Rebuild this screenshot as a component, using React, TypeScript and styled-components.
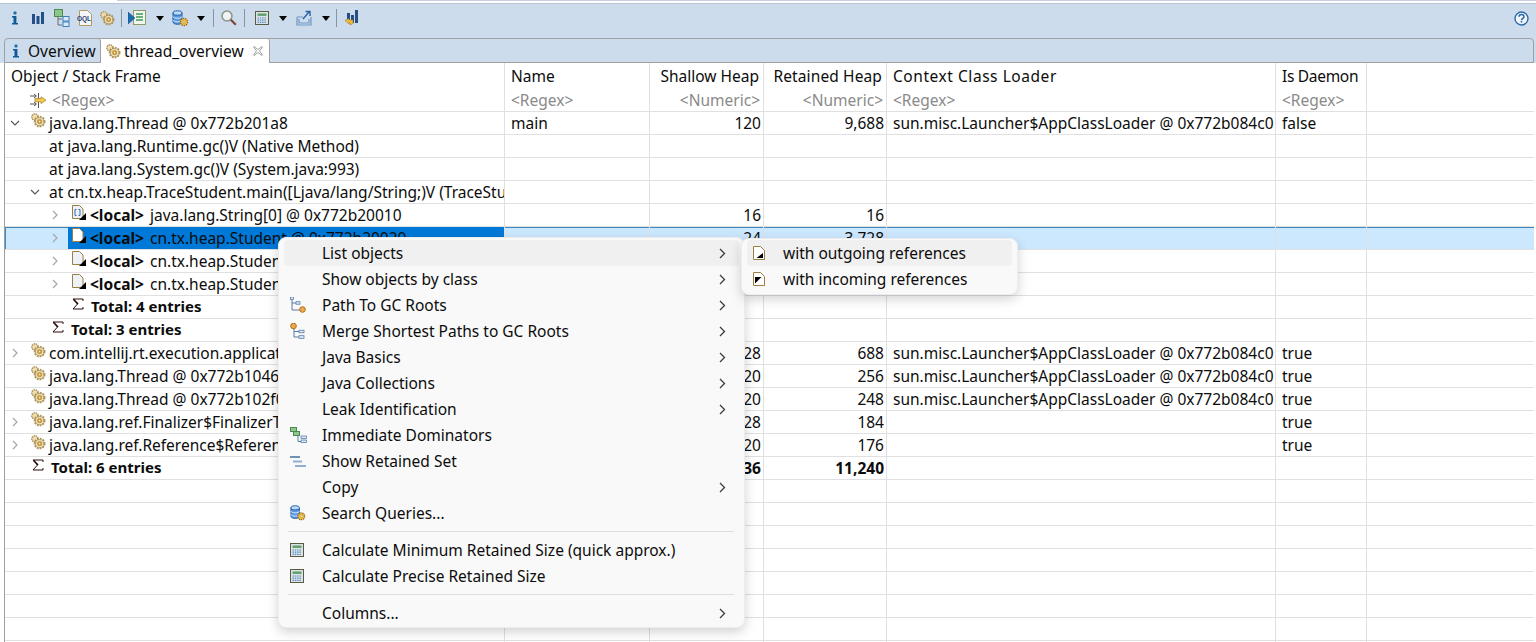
import React from "react";
import styled, { createGlobalStyle } from "styled-components";

const FONT = `"Noto Sans", "Open Sans", "Liberation Sans", sans-serif`;

const Global = createGlobalStyle`
  html, body { margin: 0; padding: 0; background: #fff; }
  body { font-family: ${FONT}; font-size: 15.5px; color: #0c0c0c; }
  * { box-sizing: border-box; }
`;

const Page = styled.div`
  position: relative;
  width: 1536px;
  height: 642px;
  overflow: hidden;
  background: #fff;
  display: flex;
  flex-direction: column;
`;
const TopStrip = styled.div`
  height: 4px;
  flex: none;
  display: flex;
  border-bottom: 1px solid #b7c3d8;
`;
const TopGap = styled.div`
  width: 117px;
  flex: none;
`;
const TopRest = styled.div`
  flex: 1;
  border-top: 1px solid #c8cfe0;
`;
const Toolbar = styled.div`
  height: 34px;
  flex: none;
  background: #cddcec;
  display: flex;
  align-items: center;
  padding: 0 7px 6px 4px;
`;
const ToolSlot = styled.div<{ $w: number }>`
  width: ${(p) => p.$w}px;
  flex: none;
  display: flex;
  align-items: center;
  justify-content: center;
`;
const ToolSep = styled.div`
  width: 4px;
  flex: none;
  height: 18px;
  display: flex;
  justify-content: center;
  &::before {
    content: "";
    width: 1px;
    background: #8a949e;
  }
`;
const DropArrow = styled.div`
  width: 0;
  height: 0;
  flex: none;
  border-left: 4.5px solid transparent;
  border-right: 4.5px solid transparent;
  border-top: 5px solid #000;
`;
const ToolSpring = styled.div`
  flex: 1;
`;
const TabStrip = styled.div`
  height: 25px;
  flex: none;
  background: #cddcec;
  padding: 0 2px 0 4px;
`;
const TabFrame = styled.div`
  height: 25px;
  border: 1px solid #a0a0a0;
  border-radius: 4px 4px 0 0;
  display: flex;
`;
const Tab = styled.div<{ $active?: boolean; $w: number }>`
  width: ${(p) => p.$w}px;
  height: ${(p) => (p.$active ? 24 : 23)}px;
  flex: none;
  display: flex;
  align-items: center;
  background: ${(p) => (p.$active ? "#fff" : "transparent")};
  border-right: 1px solid #a0a0a0;
  border-radius: 0 3px 0 0;
  padding-left: ${(p) => (p.$active ? 4 : 7)}px;
  white-space: nowrap;
  position: relative;
  z-index: 1;
`;
const TabIcon = styled.span<{ $w: number }>`
  width: ${(p) => p.$w}px;
  flex: none;
  display: flex;
`;
const TabClose = styled.span`
  margin-left: 9px;
  display: flex;
`;
const Body = styled.div`
  flex: 1;
  min-height: 0;
  margin: 0 2px 0 4px;
  border-left: 1px solid #a0a0a0;
  overflow: hidden;
`;
const COLS = "500px 145px 114px 123px 389px 91px 1fr";
const HeadGrid = styled.div`
  display: grid;
  grid-template-columns: ${COLS};
  height: 49px;
  border-bottom: 1px solid #e0e0e0;
`;
const HeadCell = styled.div<{ $right?: boolean }>`
  border-right: 1px solid #e0e0e0;
  display: flex;
  flex-direction: column;
  align-items: ${(p) => (p.$right ? "flex-end" : "flex-start")};
  padding: 1px ${(p) => (p.$right ? 3 : 0)}px 0 6px;
  overflow: hidden;
  white-space: nowrap;
  &:last-child { border-right: none; }
`;
const HeadTitle = styled.div<{ $ls?: number }>`
  height: 25px;
  line-height: 25px;
  padding-right: 1px;
  letter-spacing: ${(p) => p.$ls ?? 0}px;
`;
const HeadFilter = styled.div`
  height: 22px;
  line-height: 22px;
  color: #8a8a8a;
  display: flex;
  align-items: center;
`;
const FilterIcon = styled.span`
  width: 22px;
  margin-left: 19px;
  display: flex;
`;
const Row = styled.div<{ $sel?: boolean }>`
  display: grid;
  grid-template-columns: ${COLS};
  height: 23px;
  border-bottom: 1px solid #e0e0e0;
  background: ${(p) => (p.$sel ? "#cce8ff" : "transparent")};
  box-shadow: ${(p) => (p.$sel ? "inset 1px 1px 0 #3f87bd" : "none")};
`;
const Cell = styled.div<{ $right?: boolean; $bold?: boolean }>`
  border-right: 1px solid #e0e0e0;
  line-height: 22px;
  white-space: nowrap;
  overflow: hidden;
  text-align: ${(p) => (p.$right ? "right" : "left")};
  padding: 0 ${(p) => (p.$right ? 2 : 0)}px 0 6px;
  font-weight: ${(p) => (p.$bold ? 700 : 400)};
  &:last-child { border-right: none; }
`;
const TreeCell = styled.div<{ $depth: number }>`
  display: flex;
  align-items: center;
  height: 22px;
  border-right: 1px solid #e0e0e0;
  overflow: hidden;
  white-space: nowrap;
  padding-left: ${(p) => 2 + p.$depth * 20}px;
`;
const Twist = styled.span`
  width: 16px;
  flex: none;
  display: flex;
  justify-content: center;
`;
const NodeIcon = styled.span<{ $w: number; $pr: number; $pt: number }>`
  width: ${(p) => p.$w}px;
  flex: none;
  height: 22px;
  display: flex;
  justify-content: flex-end;
  align-items: flex-start;
  padding: ${(p) => p.$pt}px ${(p) => p.$pr}px 0 0;
`;
const IconGap = styled.span`
  width: 6px;
  flex: none;
`;
const Label = styled.span<{ $bold?: boolean }>`
  flex: none;
  height: 22px;
  line-height: ${(p) => (p.$bold ? 20 : 22)}px;
  font-weight: ${(p) => (p.$bold ? 700 : 400)};
  font-size: ${(p) => (p.$bold ? 15 : 15.5)}px;
  b { font-weight: 700; margin-right: 2px; }
`;
const SelBlock = styled.div`
  flex: 1;
  display: flex;
  align-items: center;
  height: 22px;
  margin-left: 5px;
  background: #0078d7;
  overflow: hidden;
`;
const Menu = styled.div<{ $x: number; $y: number; $w: number; $h: number; $pt: number }>`
  position: absolute;
  left: ${(p) => p.$x}px;
  top: ${(p) => p.$y}px;
  width: ${(p) => p.$w}px;
  height: ${(p) => p.$h}px;
  background: #f9f9f9;
  border: 1px solid #ececec;
  border-radius: 8px;
  box-shadow: 0 4px 12px rgba(0, 0, 0, 0.18);
  padding: ${(p) => p.$pt}px 5px 0;
  display: flex;
  flex-direction: column;
`;
const MenuItem = styled.div<{ $hot?: boolean }>`
  height: 26px;
  flex: none;
  display: flex;
  align-items: center;
  border-radius: 4px;
  background: ${(p) => (p.$hot ? "#f0f0f0" : "transparent")};
  white-space: nowrap;
  color: #0c0c0c;
`;
const MenuIcon = styled.span<{ $w: number }>`
  width: ${(p) => p.$w}px;
  flex: none;
  display: flex;
  padding-left: 6px;
`;
const MenuText = styled.span`
  flex: 1;
`;
const MenuArrow = styled.span`
  width: 20px;
  flex: none;
  display: flex;
  justify-content: flex-start;
`;
const MenuSep = styled.div`
  height: 1px;
  flex: none;
  margin: 5px 0 5px 4px;
  width: 446px;
  background: #dedede;
`;

/* ---------- icons ---------- */
const Info = () => (
  <svg width="8" height="14" viewBox="0 0 8 14">
    <rect x="2.5" y="0.5" width="3" height="3" rx="1" fill="#1d6aa8" />
    <path d="M1 5h4.400v7H7v1.500H1V12h1.500V6.500H1z" fill="#0f5a98" />
  </svg>
);
const Bars = () => (
  <svg width="14" height="14" viewBox="0 0 14 14">
    <rect x="1" y="3" width="3" height="10" fill="#234f86" />
    <rect x="5.5" y="5" width="3" height="8" fill="#234f86" />
    <rect x="10" y="1" width="3" height="12" fill="#234f86" />
  </svg>
);
const DomTree = () => (
  <svg width="16" height="18" viewBox="0 0 16 18">
    <path d="M4 7v9h4M4 10h4" fill="none" stroke="#6a6a6a" />
    <rect x="0.5" y="0.5" width="8" height="7" fill="#8cc68a" stroke="#4c8a4e" />
    <rect x="9" y="7.5" width="6" height="4.5" fill="#dbe8f6" stroke="#3d7ec0" />
    <rect x="9" y="13" width="6" height="4.5" fill="#dbe8f6" stroke="#3d7ec0" />
  </svg>
);
const Oql = () => (
  <svg width="16" height="16" viewBox="0 0 16 16">
    <path d="M2.500 .5h8l4 4v11h-12z" fill="#f4f6f8" stroke="#b39b62" />
    <text x="0" y="11" fontSize="6.500" fontWeight="700" fill="#1f3f78" fontFamily="Liberation Sans">
      OQL
    </text>
  </svg>
);
const Gear = ({ s = 16 }: { s?: number }) => (
  <svg width={s} height={s} viewBox="0 0 16 16">
    <circle cx="5" cy="5" r="3.200" fill="#f0dfb2" stroke="#a48c58" strokeWidth="1.400" strokeDasharray="1.400 .8" />
    <circle cx="9.600" cy="9.600" r="5" fill="none" stroke="#b09658" strokeWidth="1.800" strokeDasharray="1.800 1.100" />
    <circle cx="9.600" cy="9.600" r="4.100" fill="#f3e4ba" stroke="#9c8450" strokeWidth=".7" />
    <circle cx="9.600" cy="9.600" r="2.200" fill="#d6a040" stroke="#a57a2a" strokeWidth=".6" />
    <circle cx="9.600" cy="9.600" r=".8" fill="#f8eed0" />
  </svg>
);
const QueryList = () => (
  <svg width="18" height="16" viewBox="0 0 18 16">
    <rect x="5.500" y="0.5" width="12" height="14" fill="#f2f7ee" stroke="#8e9a68" />
    <path d="M8 4h7M8 7h7M8 10h7" stroke="#3c9b5a" strokeWidth="1.300" />
    <path d="M0 2l7 6-7 6z" fill="#1d6db0" stroke="#114a80" strokeWidth=".5" />
  </svg>
);
const DbGear = ({ s = 17 }: { s?: number }) => (
  <svg width={s} height={s} viewBox="0 0 17 17">
    <path d="M1 3v9c0 3 9 3 9 0V3z" fill="#5a9ae0" stroke="#1f5ea8" />
    <ellipse cx="5.500" cy="3" rx="4.500" ry="2.200" fill="#bcdaf6" stroke="#1f5ea8" />
    <path d="M1 6.500c0 2.400 9 2.400 9 0M1 10c0 2.400 9 2.400 9 0" fill="none" stroke="#dcebf9" />
    <circle cx="12" cy="12" r="3.600" fill="#f0c04a" stroke="#9a6a1a" strokeWidth="1.400" strokeDasharray="1.400 .8" />
    <circle cx="12" cy="12" r="1.300" fill="#fff4cf" stroke="#8c6a20" strokeWidth=".5" />
  </svg>
);
const Magnifier = () => (
  <svg width="16" height="16" viewBox="0 0 16 16">
    <circle cx="6" cy="6" r="5" fill="#eef4f4" stroke="#8b9188" strokeWidth="1.500" />
    <path d="M9.800 9.800l5 5" stroke="#7a4a30" strokeWidth="2.200" />
  </svg>
);
const Calc = ({ s = 14 }: { s?: number }) => (
  <svg width={s} height={s} viewBox="0 0 14 14">
    <rect x=".5" y=".5" width="13" height="13" fill="#dbe3e4" stroke="#5a5a40" />
    <rect x="2.500" y="2.500" width="9" height="2.400" fill="#5f9e6a" />
    <path d="M2.500 7h9M2.500 9.200h9M2.500 11.300h9" stroke="#5a8fc8" strokeWidth="1.200" strokeDasharray="1.500 .8" />
  </svg>
);
const ExportBox = () => (
  <svg width="16" height="16" viewBox="0 0 16 16">
    <path d="M1 7h6M15 7v8H1V7M3 9v4h10V9" fill="none" stroke="#6c96c4" strokeWidth="1.200" />
    <path d="M7 9l6-7M9.500 1.500H14V6" fill="none" stroke="#2a62a8" strokeWidth="1.400" />
  </svg>
);
const BarsArrow = () => (
  <svg width="14" height="16" viewBox="0 0 14 16">
    <rect x="2" y="3" width="3" height="9" fill="#234f86" />
    <rect x="6" y="5" width="3" height="8" fill="#234f86" />
    <rect x="10" y="0" width="3" height="13" fill="#234f86" />
    <path d="M0 10.500l4-2v1.500h4v3.500l-3 1.500v-2.500H4V14z" fill="#f2c040" stroke="#a67a20" strokeWidth=".6" />
  </svg>
);
const Help = () => (
  <svg width="15" height="15" viewBox="0 0 15 15">
    <circle cx="7.500" cy="7.500" r="6.500" fill="#f2f6fb" stroke="#2e6ca8" strokeWidth="1.400" />
    <path d="M5 5.800c0-3 5-3 5 0 0 1.800-2.500 1.600-2.500 3.400" fill="none" stroke="#2e6ca8" strokeWidth="1.500" />
    <rect x="6.700" y="10" width="1.600" height="1.600" fill="#2e6ca8" />
  </svg>
);
const Close = () => (
  <svg width="10" height="10" viewBox="0 0 10 10">
    <path d="M1 .5l4 3 4-3 .5.5-3 4 3 4-.5.5-4-3-4 3-.5-.5 3-4-3-4z" fill="#fff" stroke="#8a8a8a" strokeWidth=".8" />
  </svg>
);
const FilterGlyph = () => (
  <svg width="17" height="15" viewBox="0 0 17 15">
    <path d="M0 3h6M0 11h6M4 1l2.400 2L4 5M4 9l2.400 2L4 13M8.500 0v6M8.500 9v6" fill="none" stroke="#555" />
    <path d="M5 5.600h6V3.800l5 3.400-5 3.400V8.800H5z" fill="#f3cb52" stroke="#a67a20" strokeWidth=".7" />
  </svg>
);
const ChevDown = () => (
  <svg width="10" height="6" viewBox="0 0 10 6">
    <path d="M1 1l4 4 4-4" fill="none" stroke="#555" strokeWidth="1.100" />
  </svg>
);
const ChevRight = () => (
  <svg width="6" height="10" viewBox="0 0 6 10">
    <path d="M1 1l4 4-4 4" fill="none" stroke="#a6a6a6" strokeWidth="1.200" />
  </svg>
);
const MenuChev = () => (
  <svg width="7" height="11" viewBox="0 0 7 11">
    <path d="M1 1l4.500 4.500L1 10" fill="none" stroke="#3c3c3c" strokeWidth="1.300" />
  </svg>
);
const Sigma = () => (
  <svg width="12" height="12" viewBox="0 0 12 12">
    <path d="M11 3V1H1l4.500 5L1 11h10V9" fill="none" stroke="#2a0a0a" strokeWidth="1" />
    <path d="M1.500 1.200l4.500 4.800" stroke="#2a0a0a" strokeWidth="1.600" />
  </svg>
);
const Doc = ({ kind, fill = "#eef2f8" }: { kind: "plain" | "array"; fill?: string }) => (
  <svg width="14" height="15" viewBox="0 0 14 15">
    <path d="M.5 .5h7l3.500 3.500V13.500H.5z" fill={fill} stroke="#9a7f45" />
    {kind === "array" && <path d="M4.500 4.500H3v6h1.500M6.500 4.500H8v6H6.500" fill="none" stroke="#2d6cb0" />}
    <path d="M14 8v7H7z" fill="#000" />
  </svg>
);
const RefOut = () => (
  <svg width="12" height="14" viewBox="0 0 12 14">
    <path d="M.5 .5h7l4 4v9H.5z" fill="#fff" stroke="#9a7f45" />
    <path d="M10 7v5H3.500z" fill="#000" />
  </svg>
);
const RefIn = () => (
  <svg width="12" height="14" viewBox="0 0 12 14">
    <path d="M.5 .5h7l4 4v9H.5z" fill="#fff" stroke="#9a7f45" />
    <path d="M2 5h6.500L2 11.500z" fill="#000" />
  </svg>
);
const PathGc = () => (
  <svg width="16" height="16" viewBox="0 0 16 16">
    <path d="M2 1v12h8M2 6h6" fill="none" stroke="#5a7ca8" />
    <rect x=".5" y="0" width="3" height="2.500" fill="#dbe8f6" stroke="#4a6ea0" strokeWidth=".7" />
    <rect x="6" y="4.700" width="4" height="2.500" fill="#dbe8f6" stroke="#4a6ea0" strokeWidth=".7" />
    <circle cx="12.500" cy="12.500" r="2.800" fill="#f2a84a" stroke="#a8701f" />
  </svg>
);
const MergeGc = () => (
  <svg width="16" height="16" viewBox="0 0 16 16">
    <path d="M4 5v9h7M4 8.500h7" fill="none" stroke="#5a7ca8" />
    <circle cx="3.500" cy="3" r="2.800" fill="#f2a84a" stroke="#a8701f" />
    <rect x="9" y="7.200" width="5" height="2.600" fill="#dbe8f6" stroke="#4a6ea0" strokeWidth=".7" />
    <rect x="9" y="12.700" width="5" height="2.600" fill="#dbe8f6" stroke="#4a6ea0" strokeWidth=".7" />
  </svg>
);
const ImmDom = () => (
  <svg width="17" height="16" viewBox="0 0 17 16">
    <rect x=".5" y=".5" width="6" height="4" fill="#8cc68a" stroke="#4c8a4e" />
    <rect x="3.500" y="4.500" width="6" height="4" fill="#8cc68a" stroke="#4c8a4e" />
    <path d="M8 8.500v6h3" fill="none" stroke="#5a7ca8" />
    <rect x="11" y="9" width="5.500" height="2.500" fill="#dbe8f6" stroke="#4a6ea0" strokeWidth=".7" />
    <rect x="11" y="13" width="5.500" height="2.500" fill="#dbe8f6" stroke="#4a6ea0" strokeWidth=".7" />
  </svg>
);
const Retained = () => (
  <svg width="16" height="13" viewBox="0 0 16 13">
    <rect x="0" y="1" width="10" height="2" fill="#6f93b8" />
    <rect x="3" y="5.500" width="9" height="2" fill="#8fb0cf" />
    <rect x="5" y="10" width="11" height="2" fill="#8fb0cf" />
  </svg>
);

/* ---------- data ---------- */
type RowT = {
  depth: number;
  twist?: "down" | "right";
  icon?: "gear" | "array" | "doc" | "sigma";
  label: React.ReactNode;
  bold?: boolean;
  sel?: boolean;
  name?: string;
  shallow?: string;
  retained?: string;
  loader?: string;
  daemon?: string;
};
const LOADER = "sun.misc.Launcher$AppClassLoader @ 0x772b084c0";
const Local = ({ t }: { t: string }) => (
  <>
    <b>&lt;local&gt;</b> {t}
  </>
);
const ROWS: RowT[] = [
  { depth: 0, twist: "down", icon: "gear", label: "java.lang.Thread @ 0x772b201a8", name: "main", shallow: "120", retained: "9,688", loader: LOADER, daemon: "false" },
  { depth: 1, label: "at java.lang.Runtime.gc()V (Native Method)" },
  { depth: 1, label: "at java.lang.System.gc()V (System.java:993)" },
  { depth: 1, twist: "down", label: "at cn.tx.heap.TraceStudent.main([Ljava/lang/String;)V (TraceStudent.java:24)" },
  { depth: 2, twist: "right", icon: "array", label: <Local t="java.lang.String[0] @ 0x772b20010" />, shallow: "16", retained: "16" },
  { depth: 2, twist: "right", icon: "doc", sel: true, label: <Local t="cn.tx.heap.Student @ 0x772b20020" />, shallow: "24", retained: "3,728" },
  { depth: 2, twist: "right", icon: "doc", label: <Local t="cn.tx.heap.Student @ 0x772b20058" /> },
  { depth: 2, twist: "right", icon: "doc", label: <Local t="cn.tx.heap.Student @ 0x772b20090" /> },
  { depth: 2, icon: "sigma", label: "Total: 4 entries", bold: true },
  { depth: 1, icon: "sigma", label: "Total: 3 entries", bold: true },
  { depth: 0, twist: "right", icon: "gear", label: "com.intellij.rt.execution.application.AppMainV2$1 @ 0x772b10000", shallow: "128", retained: "688", loader: LOADER, daemon: "true" },
  { depth: 0, icon: "gear", label: "java.lang.Thread @ 0x772b10460", shallow: "120", retained: "256", loader: LOADER, daemon: "true" },
  { depth: 0, icon: "gear", label: "java.lang.Thread @ 0x772b102f0", shallow: "120", retained: "248", loader: LOADER, daemon: "true" },
  { depth: 0, twist: "right", icon: "gear", label: "java.lang.ref.Finalizer$FinalizerThread @ 0x772b10200", shallow: "128", retained: "184", daemon: "true" },
  { depth: 0, twist: "right", icon: "gear", label: "java.lang.ref.Reference$ReferenceHandler @ 0x772b10100", shallow: "120", retained: "176", daemon: "true" },
  { depth: 0, icon: "sigma", label: "Total: 6 entries", bold: true, shallow: "636", retained: "11,240" },
];

const NodeGlyph = ({ r }: { r: RowT }) => {
  if (r.icon === "gear")
    return (
      <NodeIcon $w={26} $pr={3} $pt={0}>
        <Gear />
      </NodeIcon>
    );
  if (r.icon === "array")
    return (
      <NodeIcon $w={27} $pr={4} $pt={1}>
        <Doc kind="array" />
      </NodeIcon>
    );
  if (r.icon === "doc")
    return (
      <NodeIcon $w={r.sel ? 22 : 27} $pr={4} $pt={1}>
        <Doc kind="plain" fill={r.sel ? "#fff" : "#eef2f8"} />
      </NodeIcon>
    );
  if (r.icon === "sigma")
    return (
      <NodeIcon $w={28} $pr={7} $pt={2}>
        <Sigma />
      </NodeIcon>
    );
  return <IconGap />;
};

const TreeNode = ({ r }: { r: RowT }) => (
  <TreeCell $depth={r.depth}>
    <Twist>{r.twist === "down" ? <ChevDown /> : r.twist === "right" ? <ChevRight /> : null}</Twist>
    {r.sel ? (
      <SelBlock>
        <NodeGlyph r={r} />
        <Label>{r.label}</Label>
      </SelBlock>
    ) : (
      <>
        <NodeGlyph r={r} />
        <Label $bold={r.bold}>{r.label}</Label>
      </>
    )}
  </TreeCell>
);

const HEADS: { t: string; f: string; icon?: boolean; right?: boolean; ls?: number }[] = [
  { t: "Object / Stack Frame", f: "<Regex>", icon: true },
  { t: "Name", f: "<Regex>" },
  { t: "Shallow Heap", f: "<Numeric>", right: true },
  { t: "Retained Heap", f: "<Numeric>", right: true, ls: 0.12 },
  { t: "Context Class Loader", f: "<Regex>", ls: 0.55 },
  { t: "Is Daemon", f: "<Regex>", ls: -0.3 },
  { t: "", f: "" },
];

const MENU: { t: string; icon?: React.ReactNode; arrow?: boolean; hot?: boolean; sep?: boolean }[] = [
  { t: "List objects", arrow: true, hot: true },
  { t: "Show objects by class", arrow: true },
  { t: "Path To GC Roots", arrow: true, icon: <PathGc /> },
  { t: "Merge Shortest Paths to GC Roots", arrow: true, icon: <MergeGc /> },
  { t: "Java Basics", arrow: true },
  { t: "Java Collections", arrow: true },
  { t: "Leak Identification", arrow: true },
  { t: "Immediate Dominators", icon: <ImmDom /> },
  { t: "Show Retained Set", icon: <Retained /> },
  { t: "Copy", arrow: true },
  { t: "Search Queries...", icon: <DbGear s={16} /> },
  { t: "", sep: true },
  { t: "Calculate Minimum Retained Size (quick approx.)", icon: <Calc /> },
  { t: "Calculate Precise Retained Size", icon: <Calc /> },
  { t: "", sep: true },
  { t: "Columns...", arrow: true },
];

export default function App() {
  return (
    <Page>
      <Global />
      <TopStrip>
        <TopGap />
        <TopRest />
      </TopStrip>
      <Toolbar>
        <ToolSlot $w={22}><Info /></ToolSlot>
        <ToolSlot $w={24}><Bars /></ToolSlot>
        <ToolSlot $w={24}><DomTree /></ToolSlot>
        <ToolSlot $w={21}><Oql /></ToolSlot>
        <ToolSlot $w={24}><Gear /></ToolSlot>
        <ToolSep />
        <ToolSlot $w={28}><QueryList /></ToolSlot>
        <ToolSlot $w={18}><DropArrow /></ToolSlot>
        <ToolSlot $w={22}><DbGear /></ToolSlot>
        <ToolSlot $w={20}><DropArrow /></ToolSlot>
        <ToolSep />
        <ToolSlot $w={27}><Magnifier /></ToolSlot>
        <ToolSep />
        <ToolSlot $w={32}><Calc /></ToolSlot>
        <ToolSlot $w={9}><DropArrow /></ToolSlot>
        <ToolSlot $w={34}><ExportBox /></ToolSlot>
        <ToolSlot $w={9}><DropArrow /></ToolSlot>
        <ToolSlot $w={4} />
        <ToolSep />
        <ToolSlot $w={28}><BarsArrow /></ToolSlot>
        <ToolSpring />
        <Help />
      </Toolbar>
      <TabStrip>
        <TabFrame>
          <Tab $w={96}>
            <TabIcon $w={16}><Info /></TabIcon>
            Overview
          </Tab>
          <Tab $active $w={169}>
            <TabIcon $w={19}><Gear /></TabIcon>
            thread_overview
            <TabClose><Close /></TabClose>
          </Tab>
        </TabFrame>
      </TabStrip>
      <Body>
        <HeadGrid>
          {HEADS.map((h, i) => (
            <HeadCell key={i} $right={h.right}>
              <HeadTitle $ls={h.ls}>{h.t}</HeadTitle>
              <HeadFilter>
                {h.icon && <FilterIcon><FilterGlyph /></FilterIcon>}
                {h.f}
              </HeadFilter>
            </HeadCell>
          ))}
        </HeadGrid>
        {ROWS.map((r, i) => (
          <Row key={i} $sel={r.sel}>
            <TreeNode r={r} />
            <Cell>{r.name}</Cell>
            <Cell $right $bold={r.bold}>{r.shallow}</Cell>
            <Cell $right $bold={r.bold}>{r.retained}</Cell>
            <Cell>{r.loader}</Cell>
            <Cell>{r.daemon}</Cell>
            <Cell />
          </Row>
        ))}
        {Array.from({ length: 8 }).map((_, i) => (
          <Row key={`e${i}`}>
            <Cell /><Cell /><Cell /><Cell /><Cell /><Cell /><Cell />
          </Row>
        ))}
      </Body>
      <Menu $x={278} $y={237} $w={467} $h={391} $pt={2}>
        {MENU.map((m, i) =>
          m.sep ? (
            <MenuSep key={i} />
          ) : (
            <MenuItem key={i} $hot={m.hot}>
              <MenuIcon $w={38}>{m.icon}</MenuIcon>
              <MenuText>{m.t}</MenuText>
              <MenuArrow>{m.arrow && <MenuChev />}</MenuArrow>
            </MenuItem>
          )
        )}
      </Menu>
      <Menu $x={741} $y={238} $w={277} $h={57} $pt={1}>
        <MenuItem $hot>
          <MenuIcon $w={36}><RefOut /></MenuIcon>
          <MenuText>with outgoing references</MenuText>
        </MenuItem>
        <MenuItem>
          <MenuIcon $w={36}><RefIn /></MenuIcon>
          <MenuText>with incoming references</MenuText>
        </MenuItem>
      </Menu>
    </Page>
  );
}
